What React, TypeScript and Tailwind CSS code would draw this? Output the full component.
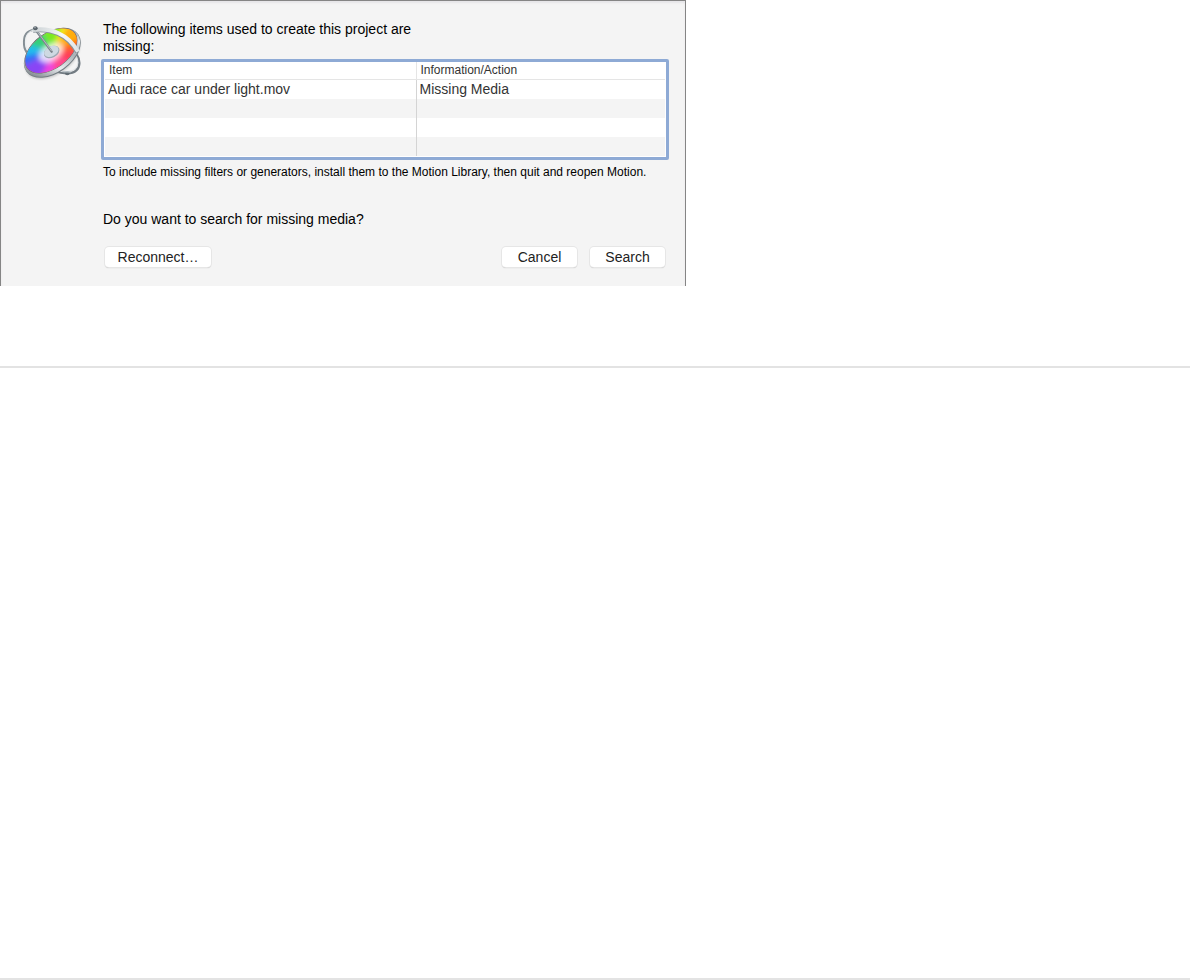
import React from 'react';

const MotionIcon: React.FC = () => (
  <svg className="h-[65px] w-[75px]" viewBox="0 0 225 195" fill="none" aria-hidden="true">
    <defs>
      <linearGradient id="rim" x1="40" y1="150" x2="195" y2="60" gradientUnits="userSpaceOnUse">
        <stop offset="0" stopColor="#858d92" />
        <stop offset="0.3" stopColor="#e8ecee" />
        <stop offset="0.6" stopColor="#aab1b6" />
        <stop offset="0.85" stopColor="#e6eaec" />
        <stop offset="1" stopColor="#8c959b" />
      </linearGradient>
      <linearGradient id="band" x1="60" y1="20" x2="190" y2="110" gradientUnits="userSpaceOnUse">
        <stop offset="0" stopColor="#ccd2d5" />
        <stop offset="0.5" stopColor="#f6f8f9" />
        <stop offset="1" stopColor="#dbe0e3" />
      </linearGradient>
      <filter id="soft" x="-30%" y="-30%" width="160%" height="160%">
        <feGaussianBlur stdDeviation="8" />
      </filter>
      <filter id="shade" x="-30%" y="-50%" width="160%" height="200%">
        <feGaussianBlur stdDeviation="3" />
      </filter>
      <clipPath id="disc">
        <ellipse cx="108" cy="92" rx="88" ry="52" transform="rotate(-36 108 92)" />
      </clipPath>
    </defs>
    <ellipse cx="113" cy="106" rx="93" ry="57" fill="#000" opacity="0.18" filter="url(#shade)" transform="rotate(-36 113 106)" />

    {/* Gyroscope ring behind the disc */}
    <path d="M58 29C34 31 25 48 27 74C28 88 34 97 40 103" stroke="#858f95" strokeWidth="6" />
    <path d="M57 30C38 34 31 48 32 70C33 83 38 92 43 97" stroke="#e9edef" strokeWidth="3" />
    <path d="M185 104C196 118 196 140 184 151C171 163 143 162 119 153" stroke="#737c83" strokeWidth="7" />
    <path d="M182 105C191 119 191 138 180 147C168 157 146 156 127 151" stroke="#dde1e4" strokeWidth="3" />

    {/* Colour disc */}
    <ellipse cx="112" cy="99" rx="96" ry="60" fill="#737c82" transform="rotate(-36 112 99)" />
    <ellipse cx="111" cy="97" rx="95" ry="59" fill="url(#rim)" transform="rotate(-36 111 97)" />
    <ellipse cx="108" cy="92" rx="90" ry="54" fill="#636c72" transform="rotate(-36 108 92)" />
    <g clipPath="url(#disc)">
      <rect x="20" y="15" width="185" height="155" fill="#ff6c6c" />
      <g filter="url(#soft)">
        <path d="M110 95L0 80L40 20L80 10Z" fill="#35cf77" />
        <path d="M110 95L74 22L120 5L148 25Z" fill="#7aea21" />
        <path d="M110 95L140 18L170 8Z" fill="#f6ee20" />
        <path d="M110 95L166 8L230 20L204 60Z" fill="#ffad0b" />
        <path d="M110 95L204 52L215 95Z" fill="#ff641f" />
        <path d="M110 95L215 88L180 145Z" fill="#ff3f57" />
        <path d="M110 95L172 130L115 190Z" fill="#ff478f" />
        <path d="M110 95L125 185L57 180Z" fill="#ef44de" />
        <path d="M110 95L72 185L10 175L22 136Z" fill="#8945f5" />
        <path d="M110 95L10 146L15 102Z" fill="#356cf7" />
        <path d="M110 95L0 112L30 70Z" fill="#20bdec" />
        <ellipse cx="108" cy="98" rx="40" ry="24" fill="#fff" opacity="0.8" transform="rotate(-30 108 98)" />
      </g>
    </g>

    {/* Hub, pin and front band */}
    <ellipse cx="110" cy="96" rx="25" ry="17" fill="#9ba8b3" transform="rotate(-27 110 96)" />
    <ellipse cx="109" cy="94" rx="23" ry="15" fill="#ced9e2" transform="rotate(-27 109 94)" />
    <path d="M60 27L110 95" stroke="#7b848b" strokeWidth="7" strokeLinecap="round" />
    <path d="M62 28L109 92" stroke="#b4bdc3" strokeWidth="3" strokeLinecap="round" />
    <path d="M54 32C105 25 157 43 187 98" stroke="#8a949a" strokeWidth="12" />
    <path d="M53 30C105 22 159 40 189 95" stroke="url(#band)" strokeWidth="12" />
    <ellipse cx="61" cy="25" rx="7" ry="6" fill="#59636a" />
    <circle cx="60" cy="23" r="2" fill="#c2ccd2" />
    <ellipse cx="157" cy="160" rx="7" ry="6" fill="#626d74" />
    <path d="M142 155L167 156" stroke="#b9c2c7" strokeWidth="4" />
  </svg>
);

const buttonClass =
  'h-5 rounded bg-white text-center text-[14px] leading-5 text-[#222] shadow-[0_0_0_1px_#e6e6e6,0_1px_1px_#b5b5b5]';

const rows = [
  { item: 'Audi race car under light.mov', action: 'Missing Media' },
  { item: '', action: '' },
  { item: '', action: '' },
  { item: '', action: '' },
];

const App: React.FC = () => {
  return (
    <main className="flex min-h-screen flex-col border-b-2 border-[#e3e3e3] bg-white font-['Liberation_Sans',Arial,sans-serif] text-black">
      <section className="flex w-full max-w-[686px] border border-b-0 border-[#858585] bg-[#f4f4f4] pr-4 pb-[19px] shadow-[inset_0_2px_2px_#e6e5e8]">
        <div className="w-[100px] shrink-0 pt-[19px] pl-[14px]">
          <MotionIcon />
        </div>
        <div className="min-w-0 flex-1 pt-5">
          <p className="max-w-[340px] pl-0.5 text-[14px] leading-[17px]">
            The following items used to create this project are missing:
          </p>

          <div className="mt-1 rounded-xs border-[3px] border-[#8eaad5] bg-white p-px pt-0">
            <table className="w-full table-fixed border-collapse text-left text-[#333]">
              <thead className="text-[12px]">
                <tr className="h-[17px] border-b border-[#e5e5e5]">
                  <th className="w-[311px] border-r border-[#e5e5e5] p-0 pl-1 leading-4 font-normal">Item</th>
                  <th className="p-0 pl-1 leading-4 font-normal">Information/Action</th>
                </tr>
              </thead>
              <tbody className="text-[14px] leading-[19px]">
                {rows.map((row, index) => (
                  <tr key={index} className="h-[19px] even:bg-[#f4f4f4]">
                    <td className="border-r border-[#d4d4d4] p-0 pl-[3px]">{row.item}</td>
                    <td className="p-0 pl-[3px]">{row.action}</td>
                  </tr>
                ))}
              </tbody>
            </table>
          </div>

          <p className="mt-1 pl-0.5 text-[12px] leading-[17px]">
            To include missing filters or generators, install them to the Motion Library, then quit and reopen Motion.
          </p>
          <p className="mt-[30px] pl-0.5 text-[14px] leading-[17px]">Do you want to search for missing media?</p>

          <div className="mt-[19px] flex items-center justify-between pr-1 pl-1">
            <button type="button" className={`w-[106px] ${buttonClass}`}>Reconnect…</button>
            <div className="flex gap-[13px]">
              <button type="button" className={`w-[75px] ${buttonClass}`}>Cancel</button>
              <button type="button" className={`w-[75px] ${buttonClass}`}>Search</button>
            </div>
          </div>
        </div>
      </section>
      <hr className="mt-20 border-t-2 border-[#e3e3e3]" />
    </main>
  );
};

export default App;
